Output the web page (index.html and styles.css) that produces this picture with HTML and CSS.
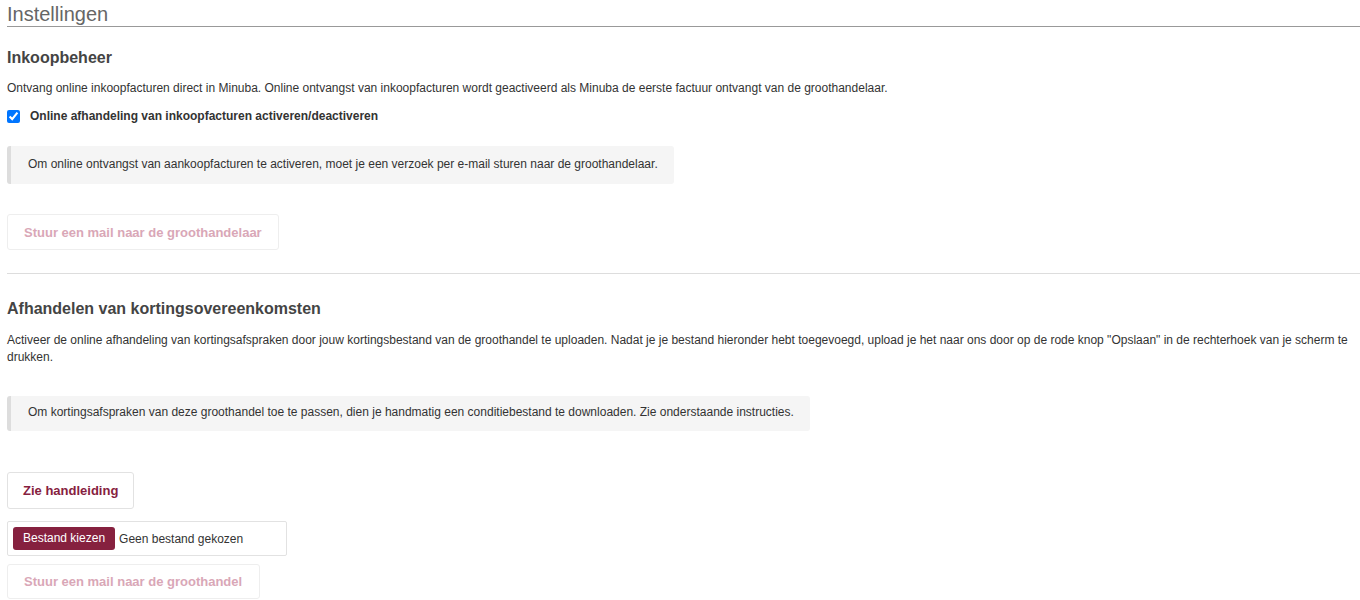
FILE: index.html
```html
<!DOCTYPE html>
<html>
    <head>
        <meta charset="utf-8">
        <title>Instellingen</title>
        <link rel="stylesheet" href="styles.css">
    </head>
    <body>
        <div class="page">
            <h1 class="page-title">Instellingen</h1>

            <section class="block">
                <h2 class="block-title">Inkoopbeheer</h2>
                <p class="block-text">Ontvang online inkoopfacturen direct in Minuba. Online ontvangst van inkoopfacturen wordt geactiveerd als Minuba de eerste factuur ontvangt van de groothandelaar.</p>
                <label class="check-row">
                    <input type="checkbox" checked>
                    <span>Online afhandeling van inkoopfacturen activeren/deactiveren</span>
                </label>
                <div class="note">Om online ontvangst van aankoopfacturen te activeren, moet je een verzoek per e-mail sturen naar de groothandelaar.</div>
                <button class="btn btn-disabled btn-mail-1" disabled>Stuur een mail naar de groothandelaar</button>
            </section>

            <hr class="divider">

            <section class="block block-second">
                <h2 class="block-title">Afhandelen van kortingsovereenkomsten</h2>
                <p class="block-text">Activeer de online afhandeling van kortingsafspraken door jouw kortingsbestand van de groothandel te uploaden. Nadat je je bestand hieronder hebt toegevoegd, upload je het naar ons door op de rode knop "Opslaan" in de rechterhoek van je scherm te drukken.</p>
                <div class="note note-wide">Om kortingsafspraken van deze groothandel toe te passen, dien je handmatig een conditiebestand te downloaden. Zie onderstaande instructies.</div>
                <button class="btn btn-link">Zie handleiding</button>
                <div class="file-box">
                    <span class="file-btn">Bestand kiezen</span>
                    <span class="file-name">Geen bestand gekozen</span>
                </div>
                <button class="btn btn-disabled btn-mail-2" disabled>Stuur een mail naar de groothandel</button>
            </section>
        </div>
    </body>
</html>
```

FILE: styles.css
```css
html, body {
    margin: 0;
    padding: 0;
    background: #fff;
}
body {
    font-family: "Liberation Sans", Arial, sans-serif;
    color: #333;
    font-size: 12px;
}
.page {
    padding: 3px 0 0 7px;
}
.page-title {
    margin: 0;
    font-size: 20px;
    font-weight: normal;
    color: #666;
    line-height: 23px;
    border-bottom: 1px solid #999;
}
.block {
    display: flex;
    flex-direction: column;
    align-items: flex-start;
}
.block-title {
    margin: 21px 0 0;
    font-size: 16px;
    font-weight: bold;
    color: #444;
    line-height: 20px;
}
.block-second .block-title {
    margin-top: 25px;
}
.block-text {
    margin: 12px 0 0;
    line-height: 17px;
    padding-right: 10px;
}
.block-second .block-text {
    margin-top: 13px;
}
.check-row {
    display: flex;
    align-items: center;
    margin-top: 11px;
    font-weight: bold;
    line-height: 17px;
}
.check-row input {
    width: 13px;
    height: 13px;
    margin: 0 10px 0 0;
    accent-color: #0075ff;
}
.note {
    margin-top: 21px;
    background: #f5f5f5;
    border-left: 4px solid #ddd;
    border-radius: 3px;
    padding: 10px 16px 11px 17px;
    line-height: 17px;
}
.note-wide {
    margin-top: 30px;
    padding: 8px 16px 10px 17px;
}
.btn {
    font-family: "Liberation Sans", Arial, sans-serif;
    background: #fff;
    border: 1px solid #eee;
    border-radius: 3px;
    font-weight: bold;
    font-size: 13px;
    padding: 0 16px;
    height: 36px;
}
.btn-disabled {
    color: #d9a7b7;
}
.btn-mail-1 {
    margin-top: 30px;
}
.btn-link {
    margin-top: 41px;
    color: #86213f;
    height: 37px;
    padding: 0 15px;
    border-color: #e2e2e2;
}
.btn-mail-2 {
    margin-top: 8px;
    height: 35px;
    padding: 0 17px 0 16px;
}
.divider {
    border: 0;
    border-top: 1px solid #ddd;
    margin: 23px 0 0;
    width: 100%;
}
.file-box {
    margin-top: 12px;
    width: 268px;
    height: 23px;
    padding: 5px;
    border: 1px solid #e2e2e2;
    border-radius: 2px;
    display: flex;
    align-items: center;
    gap: 4px;
}
.file-btn {
    background: #86213f;
    color: #fff;
    border-radius: 3px;
    padding: 0 10px;
    line-height: 23px;
    font-size: 12px;
}
.file-name {
    font-size: 12px;
    color: #333;
}
```
